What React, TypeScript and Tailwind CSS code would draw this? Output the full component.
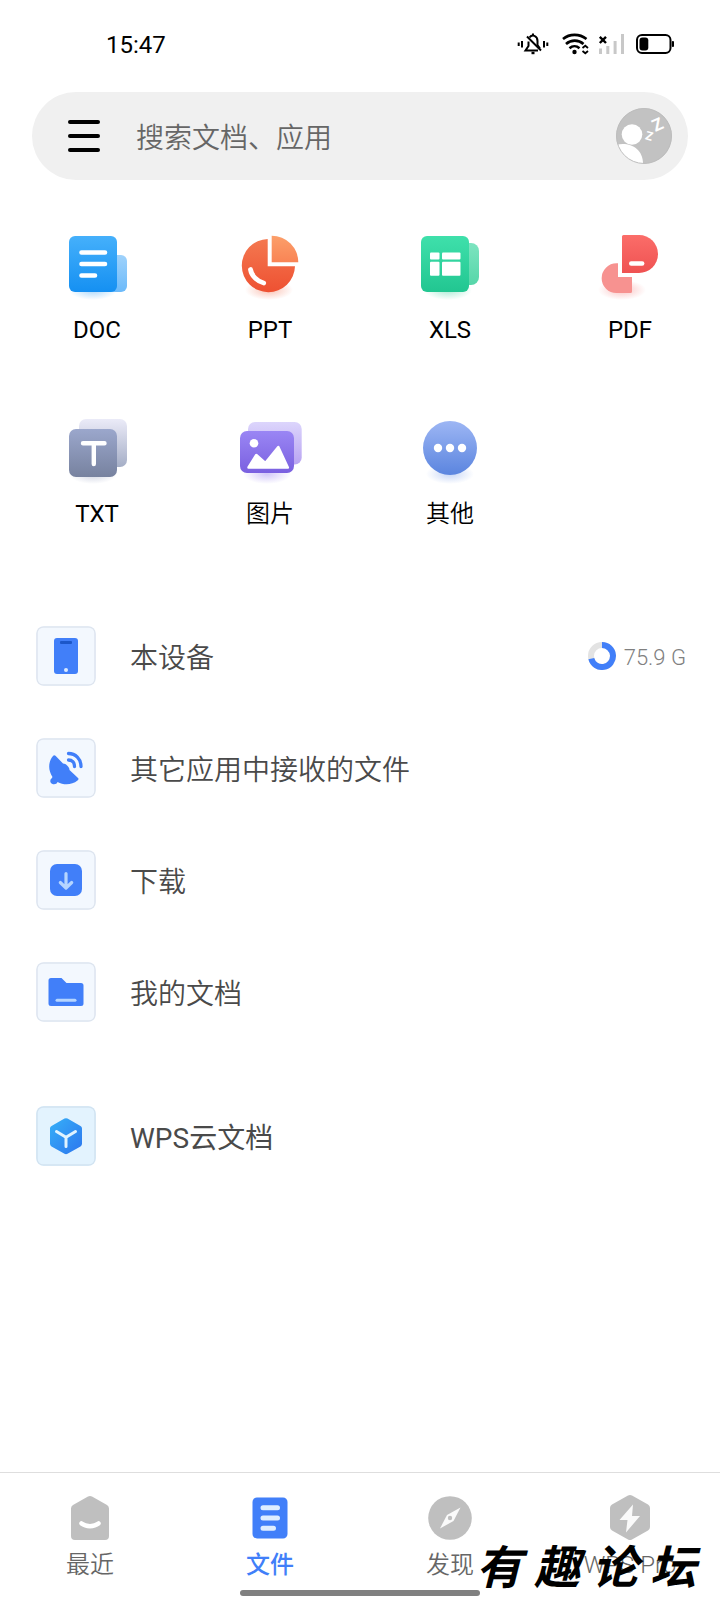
import React from 'react';
import clsx from 'clsx';

const StatusBar: React.FC = () => (
  <header className="flex h-[92px] items-center justify-between pb-1 pl-[106px] pr-11">
    <span className="pt-[2px] text-2xl text-black">15:47</span>
    <div className="flex items-center gap-2">
      <svg width="36" height="24" viewBox="0 0 36 24" fill="none" stroke="#000" strokeWidth="2">
        <path d="M11.500 9.500V14L8.500 18.500H21M12.500 5.500C15 2 20.500 3.500 20.500 9v4l2.500 3.500" />
        <path d="M16 1.500v2M10 4.500 24 18.500" />
        <path d="M14.500 21h3" strokeWidth="2.400" />
        <path d="M1.700 10.500v3.500M5 9v6.500M27 9v6.500M30.300 10.500v3.500" strokeWidth="2" />
      </svg>
      <svg width="28" height="24" viewBox="0 0 28 24" fill="none" stroke="#000" strokeWidth="2.600">
        <path d="M2 7C8.500 1.500 18.500 1.500 25.500 7M5 12C10 7.500 17.500 7.500 22.500 12M8.500 16.200C11.500 13.500 15.500 13.500 18.500 16.200" />
        <circle cx="13.5" cy="20" r="2.200" fill="#000" stroke="none" />
        <path d="M21.500 16 24.300 13.700 27 16M21.500 19 24.300 21.300 27 19" strokeWidth="1.800" />
      </svg>
      <svg width="30" height="24" viewBox="0 0 30 24" fill="#c8c8c8">
        <rect x="2" y="16.500" width="3" height="5.500" />
        <rect x="9.300" y="14" width="3" height="8" />
        <rect x="16.600" y="9" width="3" height="13" />
        <rect x="24" y="2" width="3" height="20" />
        <path d="m2.800 4.800 6.200 6.200M9 4.800 2.800 11" stroke="#000" strokeWidth="2.400" />
      </svg>
      <svg width="41" height="24" viewBox="0 0 41 24">
        <rect x="2" y="3" width="33.500" height="18" rx="5" fill="none" stroke="#000" strokeWidth="2" />
        <rect x="4.500" y="5.500" width="8.800" height="13" rx="3" />
        <rect x="36.800" y="9" width="2.200" height="6" rx="1" />
      </svg>
    </div>
  </header>
);

const SearchBar: React.FC = () => (
  <div className="mx-8 flex h-[88px] items-center rounded-full bg-[#f0f0f0] pl-9 pr-4">
    <button aria-label="菜单" className="flex h-8 w-8 flex-col justify-between">
      <span className="h-1 w-full rounded-full bg-black" />
      <span className="h-1 w-full rounded-full bg-black" />
      <span className="h-1 w-full rounded-full bg-black" />
    </button>
    <input
      type="search"
      aria-label="搜索"
      placeholder="搜索文档、应用"
      className="ml-9 min-w-0 flex-1 bg-transparent pt-[6px] text-[28px] font-[350] text-[#666] outline-none placeholder:text-[#666]"
    />
    <button aria-label="账号" className="h-14 w-14">
      <svg width="56" height="56" viewBox="0 0 56 56" fill="#fff">
        <defs>
          <clipPath id="avatar">
            <circle cx="28" cy="28" r="28" />
          </clipPath>
        </defs>
        <g clipPath="url(#avatar)">
          <circle cx="28" cy="28" r="28" fill="#c2c2c2" />
          <circle cx="16" cy="26.500" r="10.300" />
          <path d="M0 37C13 33.500 27.500 40 27 57H0Z" />
          <g fontFamily="Roboto, sans-serif" fontWeight="700" textAnchor="middle">
            <text fontSize="12" transform="translate(32 32) rotate(16)">Z</text>
            <text fontSize="17" transform="translate(44 22) rotate(-24)">Z</text>
          </g>
        </g>
        <circle cx="28" cy="28" r="27.500" fill="none" stroke="#bdbdbd" />
      </svg>
    </button>
  </div>
);

const Gradient: React.FC<{ id: string; from: string; to: string }> = ({ id, from, to }) => (
  <linearGradient id={id} x1="0" y1="0" x2="0" y2="1">
    <stop offset="0" stopColor={from} />
    <stop offset="1" stopColor={to} />
  </linearGradient>
);

const fileTypes = [
  {
    label: 'DOC',
    shadow: '#2b9bf5',
    shadowX: 28,
    icon: (
      <>
        <defs>
          <Gradient id="doc" from="#45b0fb" to="#1590f2" />
          <Gradient id="docBack" from="#9fd2fb" to="#6cbafa" />
        </defs>
        <rect x="40" y="23" width="22" height="37" rx="6" fill="url(#docBack)" />
        <rect x="4" y="4" width="48" height="56" rx="6" fill="url(#doc)" />
        <path d="M16.500 20.500h23.500M16.500 32h23.500M16.500 43.500h13.500" stroke="#fff" strokeWidth="4.600" strokeLinecap="round" />
      </>
    ),
  },
  {
    label: 'PPT',
    shadow: '#f2633f',
    shadowX: 31,
    icon: (
      <>
        <defs>
          <Gradient id="ppt" from="#f47850" to="#ee5132" />
          <Gradient id="pptSlice" from="#fc9f6a" to="#f98455" />
        </defs>
        <path d="M29.700 7A26.600 26.600 0 1 0 57 34.300H29.700Z" fill="url(#ppt)" />
        <path d="M33.700 3.700A26.600 26.600 0 0 1 60.300 30.300H33.700Z" fill="url(#pptSlice)" />
        <path d="M12.500 37.500C13.500 43.500 19 49.500 25.700 51" fill="none" stroke="#fff" strokeWidth="4.800" strokeLinecap="round" />
      </>
    ),
  },
  {
    label: 'XLS',
    shadow: '#2ccb94',
    shadowX: 30,
    icon: (
      <>
        <defs>
          <Gradient id="xls" from="#3fe0ab" to="#22c691" />
          <Gradient id="xlsBack" from="#7de4c0" to="#56d6a9" />
        </defs>
        <rect x="38" y="11" width="23" height="42" rx="8" fill="url(#xlsBack)" />
        <rect x="3" y="4" width="48" height="56" rx="6" fill="url(#xls)" />
        <g fill="#fff">
          <rect x="12" y="20.500" width="9.500" height="7" rx="1" />
          <rect x="24" y="20.500" width="18.500" height="7" rx="1" />
          <rect x="12" y="29.800" width="9.500" height="14" rx="1" />
          <rect x="24" y="29.800" width="18.500" height="14" rx="1" />
        </g>
      </>
    ),
  },
  {
    label: 'PDF',
    shadow: '#f26a68',
    shadowX: 24,
    icon: (
      <>
        <defs>
          <Gradient id="pdf" from="#fb6d69" to="#ef5252" />
        </defs>
        <path d="M25.500 3H41a19 19 0 0 1 0 38H24V4.500A1.500 1.500 0 0 1 25.500 3Z" fill="url(#pdf)" />
        <path d="M20 31.300V45H34V59.500a1.500 1.500 0 0 1-1.500 1.500H18.500A14.850 14.850 0 0 1 18.500 31.300Z" fill="#f79290" />
        <path d="M33.200 31.500h11" stroke="#fff" strokeWidth="4.400" strokeLinecap="round" />
      </>
    ),
  },
  {
    label: 'TXT',
    shadow: '#8590b4',
    shadowX: 28,
    icon: (
      <>
        <defs>
          <Gradient id="txt" from="#9ba7cc" to="#77829f" />
          <Gradient id="txtBack" from="#ebebf8" to="#a5aec6" />
        </defs>
        <rect x="14" y="3" width="48" height="48" rx="7" fill="url(#txtBack)" />
        <rect x="4" y="13" width="48" height="48" rx="7" fill="url(#txt)" />
        <path d="M18 27.300h21.500M28.800 27.300V48" stroke="#fff" strokeWidth="4.400" strokeLinecap="round" />
      </>
    ),
  },
  {
    label: '图片',
    shadow: '#8f76ee',
    shadowX: 29,
    light: true,
    icon: (
      <>
        <defs>
          <Gradient id="img" from="#9a86f4" to="#7a60e0" />
          <Gradient id="imgBack" from="#dcd5fc" to="#b9a4f2" />
        </defs>
        <rect x="10" y="6" width="53.700" height="42.500" rx="7" fill="url(#imgBack)" />
        <rect x="2" y="15" width="54" height="42" rx="7" fill="url(#img)" />
        <circle cx="16" cy="27.300" r="4.300" fill="#fff" />
        <path d="m10.500 51.500 7.800-12.500 9 8 13-16 9.500 20.500Z" fill="#fff" stroke="#fff" strokeWidth="2.500" strokeLinejoin="round" />
      </>
    ),
  },
  {
    label: '其他',
    shadow: '#7298e8',
    shadowX: 32,
    light: true,
    icon: (
      <>
        <defs>
          <Gradient id="other" from="#9db6f4" to="#5b85df" />
        </defs>
        <circle cx="32" cy="32" r="27" fill="url(#other)" />
        <g fill="#fff">
          <circle cx="20" cy="32" r="4.200" />
          <circle cx="32" cy="32" r="4.200" />
          <circle cx="44" cy="32" r="4.200" />
        </g>
      </>
    ),
  },
];

const FileTypeGrid: React.FC = () => (
  <section className="mt-[52px] grid grid-cols-4 gap-y-[68px]">
    {fileTypes.map((type, index) => (
      <button
        key={type.label}
        className={clsx('flex flex-col items-center gap-4', index % 4 === 0 && 'pl-[14px]')}
      >
        <svg width="64" height="72" viewBox="0 0 64 72" className="-mb-2">
          <defs>
            <radialGradient id={`shadow${index}`}>
              <stop offset="0" stopColor={type.shadow} stopOpacity="0.4" />
              <stop offset="1" stopColor={type.shadow} stopOpacity="0" />
            </radialGradient>
          </defs>
          <ellipse cx={type.shadowX} cy="58" rx="24" ry="10" fill={`url(#shadow${index})`} />
          {type.icon}
        </svg>
        <span className={clsx('text-2xl leading-[36px] text-black', type.light && 'font-[350]')}>
          {type.label}
        </span>
      </button>
    ))}
  </section>
);

const places = [
  {
    label: '本设备',
    usage: '75.9 G',
    icon: (
      <>
        <rect x="18" y="12" width="24" height="36" rx="3" fill="#417ff9" />
        <rect x="24" y="15" width="12" height="3" rx="1" fill="#1c57c9" />
        <circle cx="30" cy="44" r="2" fill="#dbeaff" />
      </>
    ),
  },
  {
    label: '其它应用中接收的文件',
    icon: (
      <g fill="none" stroke="#417ff9" strokeWidth="3.300" strokeLinecap="round">
        <path d="M19.500 17.800 27 25.500C30 25.500 33.500 29 33.500 32L42 40C43 41 42.500 42 41.500 42.500C36 47 28 47.500 21.500 44C21 46 18.500 46.700 16.500 46C14 45 13.500 42 15.500 40.500L16.500 39C12 32 12 24 17 18C17.700 17 18.800 17 19.500 17.800Z" fill="#417ff9" stroke="none" />
        <path d="M32.500 15.500C39.500 15.500 45 21 45 28.500M32.500 22C36 22 38.500 24.500 38.500 28.500" />
      </g>
    ),
  },
  {
    label: '下载',
    icon: (
      <>
        <rect x="14" y="14" width="32" height="32" rx="7" fill="#417ff9" />
        <path d="M30 23.500V37.500M24.300 32.500 30 38l5.700-5.500" fill="none" stroke="#b5d5ff" strokeWidth="3.200" strokeLinecap="round" strokeLinejoin="round" />
      </>
    ),
  },
  {
    label: '我的文档',
    icon: (
      <>
        <path d="M15 16H25.500L30.500 21H45a2.500 2.500 0 0 1 2.500 2.500V41.500A2.500 2.500 0 0 1 45 44H15a2.500 2.500 0 0 1-2.500-2.500V18.500A2.500 2.500 0 0 1 15 16Z" fill="#417ff9" />
        <path d="M21 38.300H39" stroke="#b5d5ff" strokeWidth="3" strokeLinecap="round" />
      </>
    ),
  },
  {
    label: 'WPS云文档',
    cloud: true,
    icon: (
      <>
        <defs>
          <linearGradient id="cube" x1="0" y1="0" x2="1" y2="1">
            <stop offset="0" stopColor="#36b0f8" />
            <stop offset="1" stopColor="#2d76ee" />
          </linearGradient>
        </defs>
        <path d="M28.500 12.600a3 3 0 0 1 3 0L44.500 20A3 3 0 0 1 46 22.600V37.800A3 3 0 0 1 44.500 40.400L31.500 47.800a3 3 0 0 1-3 0L15.500 40.400A3 3 0 0 1 14 37.800V22.600A3 3 0 0 1 15.500 20Z" fill="url(#cube)" />
        <path d="M20.500 25.500 30 31.300 39.500 25.500M30 31.300V40.500" fill="none" stroke="#e0f3ff" strokeWidth="3" strokeLinecap="round" />
      </>
    ),
  },
];

const PlaceList: React.FC = () => (
  <ul className="mt-[68px]">
    {places.map((place) => (
      <li key={place.label} className={clsx(place.cloud && 'mt-8')}>
        <button className="flex h-28 w-full items-center pl-9 pr-[34px] text-left">
          <svg
            width="60"
            height="60"
            viewBox="0 0 60 60"
            className={clsx('shrink-0 rounded-lg', place.cloud ? 'bg-[#e3f3fe]' : 'bg-[#f3f8fe]')}
          >
            <rect x="1" y="1" width="58" height="58" rx="6" fill="none" stroke={place.cloud ? '#d2e3f1' : '#dee5ef'} strokeWidth="1.500" />
            {place.icon}
          </svg>
          <span
            className={clsx(
              'ml-[34px] flex-1 pt-[6px] text-[28px] text-[#4a4a4a]',
              place.cloud ? 'font-normal' : 'font-[350]',
            )}
          >
            {place.label}
          </span>
          {place.usage && (
            <span className="flex items-center gap-2 text-[22px] font-light text-[#808080]">
              <svg width="28" height="28" viewBox="0 0 28 28" fill="none" strokeWidth="6">
                <circle cx="14" cy="14" r="11" stroke="#e3e3e3" />
                <path d="M14 3A11 11 0 1 1 3.300 16.600" stroke="#417ff9" />
              </svg>
              <span className="pt-[2px]">{place.usage}</span>
            </span>
          )}
        </button>
      </li>
    ))}
  </ul>
);

const tabs = [
  {
    label: '最近',
    icon: (
      <>
        <path d="M22 3.500a4 4 0 0 1 4 0L41 12A4 4 0 0 1 43 15.500V43A4 4 0 0 1 39 47H9A4 4 0 0 1 5 43V15.500A4 4 0 0 1 7 12Z" fill="#bfbfbf" />
        <path d="M15.500 30.500C20 34 28 34 32.500 30.500" fill="none" stroke="#fff" strokeWidth="4.500" strokeLinecap="round" />
      </>
    ),
  },
  {
    label: '文件',
    active: true,
    icon: (
      <>
        <rect x="6.500" y="4.500" width="35" height="41" rx="4.500" fill="#417ff9" />
        <path d="M17 14.700H31.500M17 25H31.500M17 35.300H27.500" stroke="#dfeeff" strokeWidth="5" strokeLinecap="round" />
      </>
    ),
  },
  {
    label: '发现',
    icon: (
      <>
        <circle cx="24" cy="25" r="21.800" fill="#bfbfbf" />
        <path d="m34.500 14.500-7 13.500L14 35.500 21 22Z" fill="#fafafa" />
        <circle cx="24" cy="25" r="2.200" fill="#bfbfbf" />
      </>
    ),
  },
  {
    label: 'WPS Pro',
    icon: (
      <>
        <path d="M22 2.600a4 4 0 0 1 4 0L42 11.500A4 4 0 0 1 44 15V34A4 4 0 0 1 42 37.500L26 46.400a4 4 0 0 1-4 0L6 37.500A4 4 0 0 1 4 34V15A4 4 0 0 1 6 11.500Z" fill="#bfbfbf" />
        <path d="M27 11.500 13.500 27H21.500L20 39.500 34 23H26Z" fill="#fafafa" />
      </>
    ),
  },
];

const TabBar: React.FC = () => (
  <nav className="relative mt-auto grid h-32 grid-cols-4 border-t border-[#dedede] pt-5">
    {tabs.map((tab) => (
      <a
        key={tab.label}
        href="#"
        aria-current={tab.active ? 'page' : undefined}
        className={clsx(
          'flex flex-col items-center gap-2 text-2xl',
          tab.active ? 'font-medium text-[#417ff9]' : 'font-[350] text-[#666]',
        )}
      >
        <svg width="48" height="48" viewBox="0 0 48 48">
          {tab.icon}
        </svg>
        {tab.label}
      </a>
    ))}
    <span className="absolute bottom-1 left-1/3 h-[6px] w-1/3 rounded-full bg-[#808080]" />
    <p className="absolute bottom-0 right-6 flex gap-[12px] text-[46px] font-bold italic leading-[64px] text-black">
      <span>有</span>
      <span>趣</span>
      <span>论</span>
      <span>坛</span>
    </p>
  </nav>
);

const App: React.FC = () => {
  return (
    <div className="flex min-h-screen flex-col bg-white font-['Roboto','Noto_Sans_CJK_SC',sans-serif]">
      <StatusBar />
      <SearchBar />
      <FileTypeGrid />
      <PlaceList />
      <TabBar />
    </div>
  );
};

export default App;
